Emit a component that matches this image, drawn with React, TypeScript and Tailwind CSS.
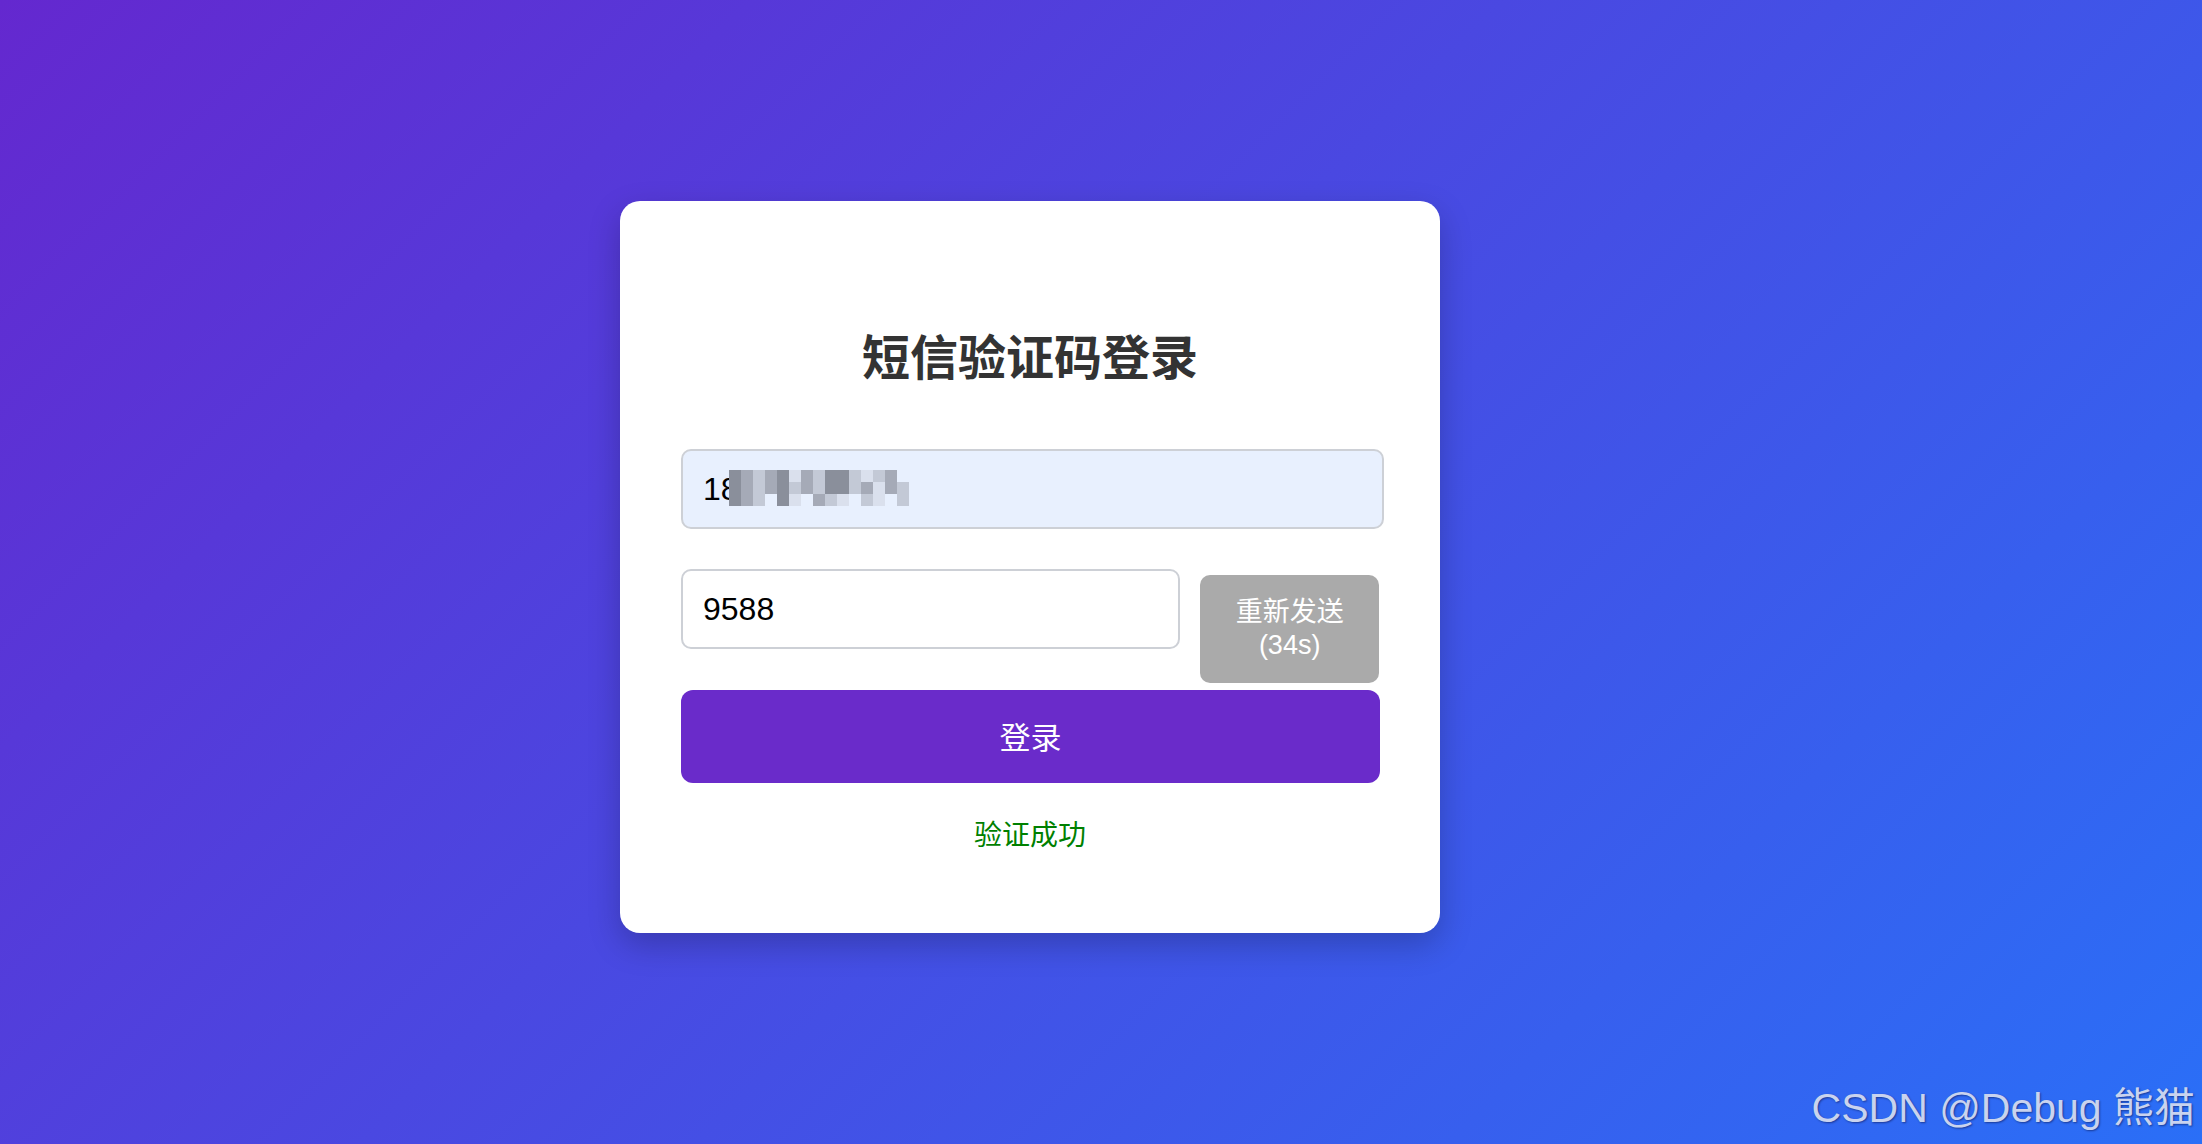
import React from 'react';

const mosaic = [
  'dmlmdxmlddlxlm.',
  'dmlmdlmlddlmxml',
  'dml.dx.mlx.lx.l',
];

const shade: Record<string, string> = {
  d: 'bg-[#8a8f9b]',
  m: 'bg-[#a5aab7]',
  l: 'bg-[#c3c9d6]',
  x: 'bg-[#dae0ed]',
  '.': 'bg-transparent',
};

export default function App() {
  return (
    <div className="relative min-h-[1144px] w-full bg-[linear-gradient(135deg,#6428cf,#2a6ff7)] flex justify-center items-center pr-[142px] pb-[10px] font-['Liberation_Sans','Noto_Sans_CJK_SC',sans-serif]">
      <div className="w-[820px] bg-white rounded-[20px] shadow-[0_12px_32px_rgba(0,0,0,0.22)] pt-[129px] pb-[86px] px-[61px] flex flex-col">
        <h1 className="text-center text-[48px] leading-[48px] font-bold text-[#333] font-['Noto_Sans_CJK_SC',sans-serif]">
          短信验证码登录
        </h1>

        <div className="relative mt-[71px] w-[703px]">
          <input
            readOnly
            value="18"
            className="w-full h-[80px] rounded-[10px] border-2 border-[#cdd0d6] bg-[#e8f0fe] px-[20px] text-[32px] text-black outline-none font-['Liberation_Sans',sans-serif]"
          />
          <div className="absolute left-[48px] top-[21px] flex flex-col">
            {mosaic.map((row, i) => (
              <div key={i} className="flex">
                {row.split('').map((c, j) => (
                  <div key={j} className={`w-[12px] h-[12px] ${shade[c]}`} />
                ))}
              </div>
            ))}
          </div>
        </div>

        <div className="mt-[40px] flex items-start gap-[20px]">
          <input
            readOnly
            value="9588"
            className="w-[500px] h-[80px] rounded-[10px] border-2 border-[#cdd0d6] bg-white px-[20px] text-[32px] text-black outline-none font-['Liberation_Sans',sans-serif]"
          />
          <button className="mt-[6px] w-[179px] h-[108px] rounded-[10px] bg-[#aaaaaa] text-white text-[27px] leading-[33px] font-['Liberation_Sans','Noto_Sans_CJK_SC',sans-serif]">
            重新发送
            <br />
            (34s)
          </button>
        </div>

        <button className="mt-[7px] w-[699px] h-[93px] rounded-[12px] bg-[#6a2bca] text-white text-[31px] font-['Noto_Sans_CJK_SC',sans-serif]">
          登录
        </button>

        <p className="mt-[36px] text-center text-[28px] leading-[28px] text-[#008000] font-['Noto_Sans_CJK_SC',sans-serif]">
          验证成功
        </p>
      </div>

      <div className="absolute right-[7px] bottom-[16px] text-[41px] leading-[40px] text-[#c9d3ef] [text-shadow:1px_1px_2px_rgba(0,0,40,0.45)] font-['Liberation_Sans','Noto_Sans_CJK_SC',sans-serif]">
        CSDN @Debug 熊猫
      </div>
    </div>
  );
}
